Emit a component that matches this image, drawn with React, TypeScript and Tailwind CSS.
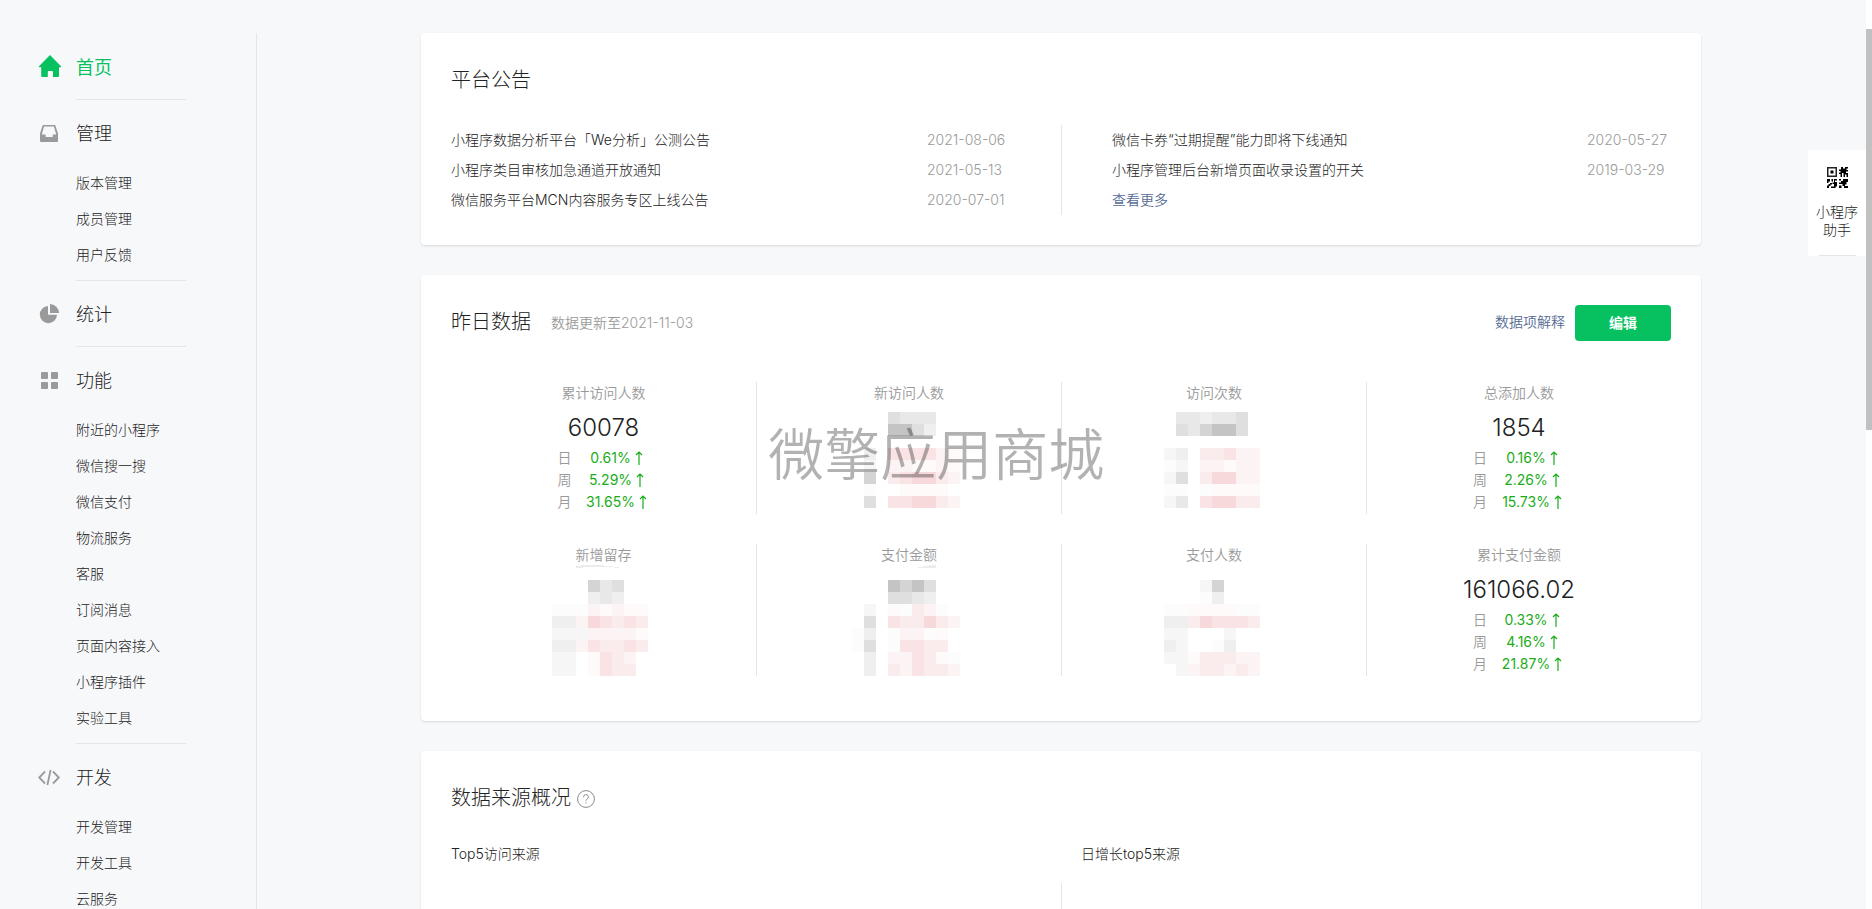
import type { ReactNode } from 'react';

interface Section {
  title: string;
  icon: ReactNode;
  active?: boolean;
  children?: string[];
}

interface Notice {
  title: string;
  date: string;
}

interface Stat {
  label: string;
  value?: string;
  day?: string;
  week?: string;
  month?: string;
  mask?: { width: number; rows: string[]; smudge?: string };
}

const HomeIcon = () => (
  <svg viewBox="0 0 24 24" className="size-6" fill="currentColor" aria-hidden="true">
    <path d="M12 0 L23.2 11.6 Q23.4 12.3 22.6 12.3 H21 V21 Q21 22 20 22 H15 V17 Q15 16 14 16 H10.6 Q9.8 16 9.8 17 V22 H4.2 Q3.2 22 3.2 21 V12.3 H1.4 Q.6 12.3 .8 11.6 Z" />
  </svg>
);

const InboxIcon = () => (
  <svg viewBox="0 0 24 24" className="size-6" fill="currentColor" fillRule="evenodd" aria-hidden="true">
    <path d="M5.4 4 H16.6 Q17.2 4 17.4 4.6 L20 12.4 V20 Q20 21 19 21 H3 Q2 21 2 20 V12.4 L4.6 4.6 Q4.8 4 5.4 4 Z M6.1 5.6 L3.8 13.4 H7.6 V16 H14.8 V13.4 H18.2 L15.9 5.6 Z" />
  </svg>
);

const PieIcon = () => (
  <svg viewBox="0 0 24 24" className="size-6" fill="currentColor" aria-hidden="true">
    <path d="M10 4 V12.8 H19 A8.6 8.6 0 1 1 10 4 Z" />
    <path d="M12 2 A9 9 0 0 1 21 11 H12 Z" />
  </svg>
);

const GridIcon = () => (
  <svg viewBox="0 0 24 24" className="size-6" fill="currentColor" aria-hidden="true">
    <rect x="3" y="4" width="7" height="7" rx="1" />
    <rect x="13" y="4" width="7" height="7" rx="1" />
    <rect x="3" y="14" width="7" height="7" rx="1" />
    <rect x="13" y="14" width="7" height="7" rx="1" />
  </svg>
);

const CodeIcon = () => (
  <svg viewBox="0 0 24 24" className="size-6" fill="none" stroke="currentColor" strokeWidth="1.8" aria-hidden="true">
    <path d="M7 6.5 L1.2 12.5 L7 18.5 M15 6.5 L20.8 12.5 L15 18.5 M12.6 5 L9.4 20" />
  </svg>
);

const QrIcon = () => (
  <svg viewBox="0 0 21 21" className="size-[21px]" aria-hidden="true">
    <path fill="none" stroke="currentColor" strokeWidth="1.5" d="M.75 .75h8.5v8.5h-8.5z" />
    <path d="M3.5 3.5h3v3h-3z" />
    {/* top right */}
    <path d="M14 0h2v1.5h2V0h3v1.5h-1.5V3H21v1.5h-2V6h2v4h-1.5V7.5H18V10h-1.5V6H15v4h-1.5V7H12V5.5h1.5V4H12V2.5h2z" />
    {/* bottom left */}
    <path d="M0 12h3v2.5H1.5V16H0zM4.5 12H6v2.5H4.5zM7 12h3v1.5H8V15h2v4.5H8.5V21H4v-1.5h3V17H5.5v-1.5H7zM3 16h2v1.5H3.5V19H2v2H0v-2.5h1.5V17H3z" />
    {/* bottom right */}
    <path d="M16 12h5v3h-1.5v2.5H18V19h3v2h-4v-2h-1.5v-2H12v-1.5h2V14h2zM12 12h2v1.5h-2zM12 18.5h2.5V21H12z" />
  </svg>
);

const sections: Section[] = [
  { title: '首页', icon: <HomeIcon />, active: true },
  { title: '管理', icon: <InboxIcon />, children: ['版本管理', '成员管理', '用户反馈'] },
  { title: '统计', icon: <PieIcon /> },
  {
    title: '功能',
    icon: <GridIcon />,
    children: ['附近的小程序', '微信搜一搜', '微信支付', '物流服务', '客服', '订阅消息', '页面内容接入', '小程序插件', '实验工具'],
  },
  { title: '开发', icon: <CodeIcon />, children: ['开发管理', '开发工具', '云服务'] },
];

const leftNotices: Notice[] = [
  { title: '小程序数据分析平台「We分析」公测公告', date: '2021-08-06' },
  { title: '小程序类目审核加急通道开放通知', date: '2021-05-13' },
  { title: '微信服务平台MCN内容服务专区上线公告', date: '2020-07-01' },
];

const rightNotices: Notice[] = [
  { title: '微信卡券“过期提醒”能力即将下线通知', date: '2020-05-27' },
  { title: '小程序管理后台新增页面收录设置的开关', date: '2019-03-29' },
];

// one letter per 12px block, see blockColors
const stats: Stat[] = [
  { label: '累计访问人数', value: '60078', day: '0.61%', week: '5.29%', month: '31.65%' },
  {
    label: '新访问人数',
    mask: {
      width: 114,
      rows: ['...cddd..', '...aace..', '.........', '.e.QQQQST', '.f.SSTTST', '.b.RQPPRS', '.g..TTTT.', '.c.QQPPRS'],
    },
  },
  {
    label: '访问次数',
    mask: {
      width: 100,
      rows: ['.ddeddc.', '.cdbaac.', '........', 'fe.RRQSS', 'gf.SSTSS', 'fc.RPPSS', 'gg.gTTTT', 'fd.QPPRR'],
    },
  },
  { label: '总添加人数', value: '1854', day: '0.16%', week: '2.26%', month: '15.73%' },
  {
    label: '新增留存',
    mask: {
      width: 104,
      rows: ['...bdc..', '...ede..', 'gggSTSTT', 'eeSPQRQR', 'fffSSSST', 'eeSQRRQR', 'ff.TQRS.', 'ff.TQRR.'],
      smudge: 'M24 -12 V-14 Q46 -17 70 -12 Q46 -14 24 -12 Z',
    },
  },
  {
    label: '支付金额',
    mask: {
      width: 114,
      rows: ['...abac..', '...ccde..', '.f.TgRSg.', '.c.QRRPRS', 'ge.gSSgT.', 'gc.gQQRR.', '.e.SSQRTg', '.e.RSQRRS'],
      smudge: 'M64 -12 Q74 -15 84 -15 V-12 Z',
    },
  },
  {
    label: '支付人数',
    mask: {
      width: 100,
      rows: ['...fb...', '...ge...', 'ggTTTTgg', 'eeRPQQQR', 'ff...f..', 'ef..ge..', 'ffTRRRSS', '.fSRRSRS'],
    },
  },
  { label: '累计支付金额', value: '161066.02', day: '0.33%', week: '4.16%', month: '21.87%' },
];

const blockColors: Record<string, string> = {
  a: '#c4c4c4',
  b: '#d4d4d4',
  c: '#dfdfdf',
  d: '#e8e8e8',
  e: '#efefef',
  f: '#f6f6f6',
  g: '#fcfcfc',
  P: '#f7d9dc',
  Q: '#f9e3e5',
  R: '#faebec',
  S: '#fcf3f4',
  T: '#fefafa',
};

function Mosaic({ width, rows, smudge }: { width: number; rows: string[]; smudge?: string }) {
  return (
    <svg width={width} height={96} viewBox={`0 0 ${width} 96`} overflow="visible" shapeRendering="crispEdges" aria-hidden="true">
      {rows.map((row, y) =>
        row.split('').map((c, x) =>
          c === '.' ? null : <rect key={`${x}-${y}`} x={x * 12} y={y * 12} width={12} height={12} fill={blockColors[c]} />
        )
      )}
      {smudge && <path d={smudge} fill="#ececec" />}
    </svg>
  );
}

function NoticeRow({ title, date }: Notice) {
  return (
    <li className="flex justify-between">
      <a href="#" className="hover:text-[#07c160]">{title}</a>
      <time className="w-21 font-[350] text-[#9a9a9a]">{date}</time>
    </li>
  );
}

function Trend({ label, value }: { label: string; value?: string }) {
  return (
    <div className="flex gap-3">
      <dt className="font-[350] text-[#9a9a9a]">{label}</dt>
      <dd className="flex w-[66px] justify-center gap-1 font-normal text-[#1aad19]">
        {value}
        <svg viewBox="0 0 8 14" className="mt-1 h-3.5 w-2 shrink-0" fill="none" stroke="currentColor" strokeWidth="1.2" aria-label="上升">
          <path d="M4 14 V1 M1 4 L4 1 L7 4" />
        </svg>
      </dd>
    </div>
  );
}

function StatCell({ stat, index }: { stat: Stat; index: number }) {
  const first = index % 4 === 0;
  return (
    <div className={`flex h-[132px] flex-col items-center ${first ? '' : 'border-l border-[#e4e5e6]'}`}>
      <h3 className="leading-[22px] font-[350] text-[#9a9a9a]">{stat.label}</h3>
      {stat.mask ? (
        <div className={index < 4 ? 'mt-2' : 'mt-3.5'}>
          <Mosaic {...stat.mask} />
        </div>
      ) : (
        <>
          <p className="mt-1.5 text-2xl leading-9">{stat.value}</p>
          <dl className="mt-px leading-[22px]">
            <Trend label="日" value={stat.day} />
            <Trend label="周" value={stat.week} />
            <Trend label="月" value={stat.month} />
          </dl>
        </>
      )}
    </div>
  );
}

function Card({ children }: { children: ReactNode }) {
  return <section className="rounded bg-white p-[30px] shadow-[0_1px_2px_rgba(150,150,150,0.3)]">{children}</section>;
}

function Sidebar() {
  return (
    <nav className="w-[257px] shrink-0 border-r border-[#e4e5e7] pt-px pl-[38px]">
      {sections.map((s, i) => (
        <div key={s.title}>
          <a href="#" className={`flex h-[65px] items-center gap-3.5 text-lg ${s.active ? 'font-normal text-[#07c160]' : ''}`}>
            <span className={s.active ? 'text-[#07c160]' : 'text-[#9a9a9a]'}>{s.icon}</span>
            <span className="pt-0.5">{s.title}</span>
          </a>
          {s.children && (
            <ul className="ml-[38px] pb-[7px]">
              {s.children.map((c) => (
                <li key={c}>
                  <a href="#" className="block leading-9 hover:text-[#07c160]">{c}</a>
                </li>
              ))}
            </ul>
          )}
          {i < sections.length - 1 && <hr className="ml-[38px] w-[110px] border-[#e4e5e7]" />}
        </div>
      ))}
    </nav>
  );
}

export default function App() {
  return (
    <div className="flex h-screen bg-[#f7f8fa] font-['Inter','Noto_Sans_CJK_SC',sans-serif] text-sm font-light text-[#222]">
      <div className="flex min-w-0 flex-1 items-start overflow-y-auto pt-[33px] [scrollbar-width:none]">
        <Sidebar />

        <main className="min-w-0 flex-1 pr-px pb-[30px]">
          <div className="mx-auto flex max-w-[1280px] flex-col gap-[30px]">
            {/* 平台公告 */}
            <Card>
              <h2 className="text-xl leading-[34px]">平台公告</h2>
              <div className="mt-7 grid grid-cols-2 leading-[30px]">
                <ul className="pr-[50px]">
                  {leftNotices.map((n) => <NoticeRow key={n.title} {...n} />)}
                </ul>
                <ul className="border-l border-[#e4e5e6] pl-[50px]">
                  {rightNotices.map((n) => <NoticeRow key={n.title} {...n} />)}
                  <li><a href="#" className="font-[350] text-[#576b95]">查看更多</a></li>
                </ul>
              </div>
            </Card>

            {/* 昨日数据 */}
            <Card>
              <div className="flex items-start">
                <h2 className="text-xl leading-[34px]">昨日数据</h2>
                <span className="ml-5 leading-9 font-[350] text-[#9a9a9a]">数据更新至2021-11-03</span>
                <a href="#" className="ml-auto leading-[34px] font-[350] text-[#576b95]">数据项解释</a>
                <button type="button" className="ml-2.5 h-9 w-24 rounded bg-[#07c160] font-bold text-white">编辑</button>
              </div>
              <div className="relative mt-[41px] mb-[15px]">
                <div className="grid grid-cols-4 gap-y-[30px]">
                  {stats.map((s, i) => <StatCell key={s.label} stat={s} index={i} />)}
                </div>
                {/* watermark */}
                <span className="pointer-events-none absolute top-10 left-[26%] text-[56px] leading-[66px] font-[350] whitespace-nowrap text-black/30">
                  微擎应用商城
                </span>
              </div>
            </Card>

            {/* 数据来源概况 */}
            <Card>
              <div className="flex items-center gap-1.5">
                <h2 className="text-xl leading-[34px]">数据来源概况</h2>
                <button type="button" aria-label="说明" className="mt-0.5 text-[#8a8a8a]">
                  <svg viewBox="0 0 18 18" className="size-[18px]" fill="none" stroke="currentColor" aria-hidden="true">
                    <circle cx="9" cy="9" r="8.4" />
                    <path d="M6.6 7.2 A2.4 2.4 0 1 1 9.8 9.2 Q9 9.6 9 10.8 M9 12.2 V13.4" />
                  </svg>
                </button>
              </div>
              <div className="mt-7 grid grid-cols-2 leading-[22px]">
                <h3>Top5访问来源</h3>
                <h3 className="pl-5">日增长top5来源</h3>
                <div className="mt-[18px] h-60" />
                <div className="mt-[18px] h-60 border-l border-[#e4e5e6]" />
              </div>
            </Card>
          </div>
        </main>
      </div>

      {/* Scroll track */}
      <div className="w-1.5 shrink-0 bg-white pt-[29px]">
        <div className="h-[401px] bg-[#c1c1c1]" />
      </div>

      {/* Helper shortcut */}
      <a href="#" className="fixed top-[150px] right-1.5 flex w-[58px] flex-col items-center bg-white pt-[17px] text-center leading-[18px]">
        <QrIcon />
        <span className="mt-[15px]">小程序<br />助手</span>
        <span className="mt-4 h-px w-[37px] bg-[#e4e5e6]" />
      </a>
    </div>
  );
}
